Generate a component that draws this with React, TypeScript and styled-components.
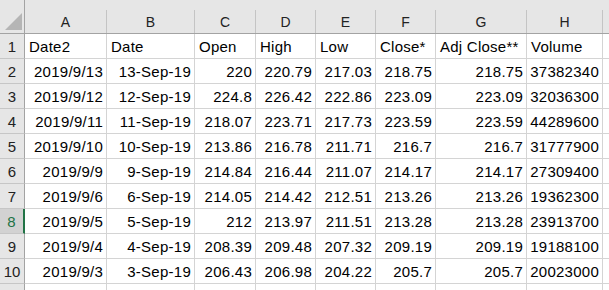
import styled, { createGlobalStyle } from "styled-components";

const GlobalStyle = createGlobalStyle`
  html, body {
    margin: 0;
    padding: 0;
    background: #ffffff;
    overflow: hidden;
  }
`;

const COLS = [82, 88, 61, 60, 60, 60, 91, 76];
const LETTERS = ["A", "B", "C", "D", "E", "F", "G", "H", ""];

const rows: string[][] = [
  ["Date2", "Date", "Open", "High", "Low", "Close*", "Adj Close**", "Volume"],
  ["2019/9/13", "13-Sep-19", "220", "220.79", "217.03", "218.75", "218.75", "37382340"],
  ["2019/9/12", "12-Sep-19", "224.8", "226.42", "222.86", "223.09", "223.09", "32036300"],
  ["2019/9/11", "11-Sep-19", "218.07", "223.71", "217.73", "223.59", "223.59", "44289600"],
  ["2019/9/10", "10-Sep-19", "213.86", "216.78", "211.71", "216.7", "216.7", "31777900"],
  ["2019/9/9", "9-Sep-19", "214.84", "216.44", "211.07", "214.17", "214.17", "27309400"],
  ["2019/9/6", "6-Sep-19", "214.05", "214.42", "212.51", "213.26", "213.26", "19362300"],
  ["2019/9/5", "5-Sep-19", "212", "213.97", "211.51", "213.28", "213.28", "23913700"],
  ["2019/9/4", "4-Sep-19", "208.39", "209.48", "207.32", "209.19", "209.19", "19188100"],
  ["2019/9/3", "3-Sep-19", "206.43", "206.98", "204.22", "205.7", "205.7", "20023000"],
  ["2019/8/30", "30-Aug-19", "210.16", "210.45", "207.2", "208.74", "208.74", "21143400"],
];

const Sheet = styled.div`
  display: grid;
  grid-template-columns: 25px ${COLS.map((c) => `${c}px`).join(" ")} 1fr;
  width: 609px;
  height: 290px;
  overflow: hidden;
  font-family: "Liberation Sans", Arial, sans-serif;
  color: #000;
`;

const Corner = styled.div`
  position: relative;
  height: 34px;
  box-sizing: border-box;
  background: #e6e6e6;
  border-right: 1px solid #a3a3a3;
  border-bottom: 1px solid #a3a3a3;
`;

const Triangle = styled.div`
  position: absolute;
  left: 5px;
  top: 13px;
  width: 17px;
  height: 17px;
  background: #b5b5b5;
  clip-path: polygon(100% 0, 100% 100%, 0 100%);
`;

const ColHeader = styled.div`
  height: 34px;
  box-sizing: border-box;
  background: #e6e6e6;
  border-bottom: 1px solid #a3a3a3;
  padding-top: 10px;
`;

const ColLetter = styled.div`
  height: 23px;
  box-sizing: border-box;
  border-right: 1px solid #c4c4c4;
  display: flex;
  align-items: center;
  justify-content: center;
  font-size: 14px;
  color: #222;
`;

const RowHeader = styled.div<{ $selected?: boolean }>`
  height: 25px;
  box-sizing: border-box;
  background: ${(p) => (p.$selected ? "#d2d2d2" : "#e6e6e6")};
  color: ${(p) => (p.$selected ? "#217346" : "#222")};
  border-right: ${(p) => (p.$selected ? "2px solid #217346" : "1px solid #a3a3a3")};
  border-bottom: 1px solid #c6c6c6;
  display: flex;
  align-items: center;
  justify-content: center;
  font-size: 15px;
`;

const Cell = styled.div<{ $align: "left" | "right" }>`
  height: 25px;
  box-sizing: border-box;
  border-right: 1px solid #d4d4d4;
  border-bottom: 1px solid #d4d4d4;
  display: flex;
  align-items: center;
  justify-content: ${(p) => (p.$align === "left" ? "flex-start" : "flex-end")};
  padding: 0 3px 0 4px;
  font-size: 15px;
  letter-spacing: 0.25px;
  white-space: nowrap;
  overflow: hidden;
`;

function App() {
  return (
    <>
      <GlobalStyle />
      <Sheet>
        <Corner>
          <Triangle />
        </Corner>
        {LETTERS.map((l, i) => (
          <ColHeader key={i}>
            <ColLetter>{l}</ColLetter>
          </ColHeader>
        ))}
        {rows.map((r, ri) => (
          <>
            <RowHeader key={`h${ri}`} $selected={ri === 7}>
              {ri + 1}
            </RowHeader>
            {r.map((v, ci) => (
              <Cell key={`${ri}-${ci}`} $align={ri === 0 ? "left" : "right"}>
                {v}
              </Cell>
            ))}
            <Cell key={`${ri}-x`} $align="left" />
          </>
        ))}
      </Sheet>
    </>
  );
}

export default App;
